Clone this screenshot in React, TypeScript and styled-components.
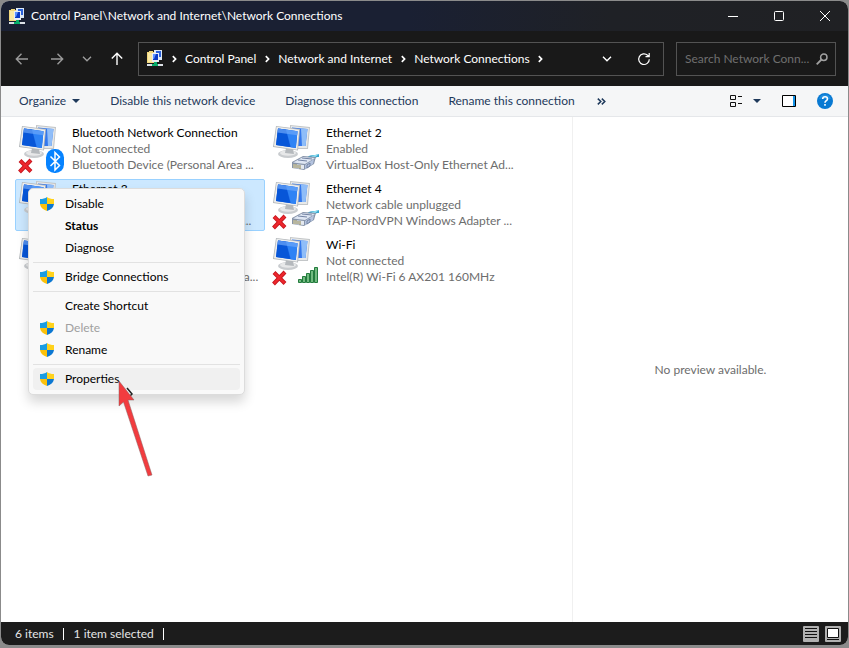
import React from "react";
import styled, { createGlobalStyle, css } from "styled-components";

const GlobalStyle = createGlobalStyle`
  *, *::before, *::after { box-sizing: border-box; }
  html, body { margin: 0; padding: 0; }
  body {
    background: #8b8b8b;
    font-family: Lato, "Open Sans", sans-serif;
    font-size: 12px;
    line-height: 16px;
    color: #000;
  }
  button, input { font: inherit; color: inherit; }
  svg { display: block; flex: none; }
`;

const Desktop = styled.div`
  display: flex;
  min-height: 100vh;
  padding: 1px 1px 3px;
`;

const Window = styled.main`
  display: flex;
  flex: 1;
  flex-direction: column;
  min-width: 0;
  overflow: hidden;
  border-radius: 8px;
  background: #fff;
`;

const PlainButton = styled.button`
  display: flex;
  align-items: center;
  justify-content: center;
  padding: 0;
  border: 0;
  background: transparent;
  white-space: nowrap;
`;

const TitleBar = styled.header`
  display: flex;
  align-items: center;
  height: 30px;
  padding-left: 8px;
  color: #fff;
  background: linear-gradient(90deg, #1a2033 0%, #1a2033 48%, #1f2126 72%, #202124 100%);
`;

const Title = styled.h1`
  flex: 1;
  margin: 0 0 0 6px;
  font-size: 12px;
  font-weight: 400;
  white-space: nowrap;
`;

const CaptionButton = styled(PlainButton)`
  width: 46px;
  height: 30px;
`;

const NavBar = styled.nav`
  display: flex;
  align-items: center;
  gap: 12px;
  height: 55px;
  padding: 0 12px 0 13px;
  color: #fff;
  background: #191919;
`;

const NavButtons = styled.div`
  display: flex;
  gap: 14px;
  padding-right: 1px;
`;

const HistoryButtons = styled.div`
  display: flex;
  gap: 19px;
`;

const NavButton = styled(PlainButton)<{ $dim?: boolean }>`
  width: 16px;
  height: 32px;
  color: ${(p) => (p.$dim ? "#9b9b9b" : "#fff")};
`;

const AddressBar = styled.div`
  display: flex;
  flex: 1;
  align-items: center;
  height: 34px;
  padding: 0 8px;
  border: 1px solid #535353;
`;

const Crumb = styled.a`
  color: #fff;
  text-decoration: none;
  white-space: nowrap;
`;

const CrumbArrow = styled.span`
  display: flex;
  justify-content: center;
  width: 22px;
`;

const Spacer = styled.div`
  flex: 1;
`;

const AddressButton = styled(PlainButton)`
  width: 22px;
  height: 32px;
  margin-left: 15px;
`;

const SearchBox = styled.label`
  display: flex;
  align-items: center;
  width: 160px;
  height: 34px;
  padding: 0 7px 0 8px;
  border: 1px solid #535353;
`;

const SearchInput = styled.input`
  flex: 1;
  min-width: 0;
  padding: 0;
  border: 0;
  outline: 0;
  background: transparent;
  text-overflow: ellipsis;
  &::placeholder { color: #6f6f6f; opacity: 1; }
`;

const CommandBar = styled.div`
  display: flex;
  align-items: center;
  gap: 30px;
  height: 31px;
  padding: 0 15px 0 18px;
  border-bottom: 1px solid #e5e7ea;
  color: #1e395b;
  background: #f5f6f7;
`;

const CommandGroup = styled.div`
  display: flex;
  gap: 22px;
`;

const Command = styled(PlainButton)<{ $wide?: boolean }>`
  gap: ${(p) => (p.$wide ? 10 : 6)}px;
  height: 30px;
`;

const CommandIcons = styled.div`
  display: flex;
  align-items: center;
  gap: 21px;
  margin-left: auto;
`;

const Body = styled.div`
  display: flex;
  flex: 1;
`;

const ListPane = styled.section`
  position: relative;
  flex: 1;
  min-width: 0;
  padding: 6px 0 8px 14px;
`;

const ConnectionList = styled.ul`
  display: grid;
  grid-template-columns: repeat(2, 250px);
  gap: 4px;
  margin: 0;
  padding: 0;
  list-style: none;
`;

const ConnectionItem = styled.li<{ $selected?: boolean }>`
  display: flex;
  gap: 7px;
  height: 52px;
  padding: 1px 0 0 2px;
  border: 1px solid ${(p) => (p.$selected ? "#99d1ff" : "transparent")};
  border-radius: 2px;
  background: ${(p) => (p.$selected ? "#cce8ff" : "transparent")};
`;

const ConnectionText = styled.div`
  color: #6d6d6d;
  white-space: nowrap;
`;

const ConnectionName = styled.div`
  color: #000;
`;

const PreviewPane = styled.aside`
  display: flex;
  align-items: center;
  justify-content: center;
  width: 276px;
  border-left: 1px solid #f0f0f0;
  color: #6d6d6d;
`;

const Menu = styled.div`
  position: absolute;
  top: 71px;
  left: 27px;
  width: 217px;
  padding: 4px;
  border: 1px solid #dcdcdc;
  border-radius: 5px;
  background: #f9f9f9;
  box-shadow: 0 7px 12px rgba(0, 0, 0, 0.16);
`;

const MenuItem = styled.button<{ $bold?: boolean; $hover?: boolean }>`
  display: grid;
  grid-template-columns: 14px 1fr;
  align-items: center;
  gap: 11px;
  width: 100%;
  height: 22px;
  padding: 0 7px;
  border: 0;
  border-radius: 4px;
  background: ${(p) => (p.$hover ? "#f0f0f0" : "transparent")};
  text-align: left;
  ${(p) => p.$bold && css`font-weight: 700;`}
  &:disabled { color: #a0a0a0; }
`;

const MenuLabel = styled.span`
  grid-column: 2;
`;

const MenuRule = styled.hr`
  height: 1px;
  margin: 3px 0;
  border: 0;
  background: #e2e2e2;
`;

const Pointer = styled.div`
  position: absolute;
  top: 263px;
  left: 116px;
  pointer-events: none;
`;

const StatusBar = styled.footer`
  display: flex;
  align-items: center;
  height: 23px;
  padding: 0 7px 0 14px;
  color: #e6e6e6;
  background: #1c1c1c;
`;

const StatusText = styled.span`
  margin-right: 10px;
  padding-right: 9px;
  line-height: 12px;
  border-right: 1px solid #fff;
`;

const ViewButton = styled(PlainButton)`
  width: 16px;
  height: 16px;
  margin-left: 6px;
  border-radius: 1px;
  background: #b1b1b1;
`;

const FolderIcon = () => (
  <svg width="16" height="17" viewBox="0 0 16 17" aria-hidden="true">
    <path d="M0 2h2V1h4v1h2v11H0z" fill="#f2d77c" />
    <path d="M1 3h6v9H1z" fill="#fae9a5" />
    <path d="M7 0h8v10H7z" fill="#dce9f7" />
    <path d="M9 1h5v6H9z" fill="#2b61da" />
    <path d="M5 3h7v9H5z" fill="#e8edf4" />
    <path d="M6 4h5v6H6z" fill="#0939c5" />
    <path d="M6 4h3L7 9H6z" fill="#5c92ff" />
    <path d="M0 14h16v2H0z" fill="#dce1e6" />
    <path d="M7 12h3v2h1v2H5v-2h2z" fill="#08ae6a" />
  </svg>
);

const Chevron = ({ down }: { down?: boolean }) =>
  down ? (
    <svg width="10" height="6" viewBox="0 0 10 6" fill="none" stroke="currentColor" strokeWidth="1.4" aria-hidden="true">
      <path d="M1 .8 5 4.8 9 .8" />
    </svg>
  ) : (
    <svg width="5" height="8" viewBox="0 0 5 8" fill="none" stroke="currentColor" strokeWidth="1.7" aria-hidden="true">
      <path d="M.8 1.200 3.600 4 .8 6.800" />
    </svg>
  );

const Arrow = ({ turn = 0 }: { turn?: number }) => (
  <svg width="14" height="14" viewBox="0 0 14 14" fill="none" stroke="currentColor" strokeWidth="1.4" aria-hidden="true">
    <path transform={`rotate(${turn} 7 7)`} d="M13 7H1.5M6.500 1.800 1.300 7l5.200 5.200" />
  </svg>
);

const CaretDown = () => (
  <svg width="8" height="4" viewBox="0 0 8 4" aria-hidden="true">
    <path d="M0 0h8L4 4z" fill="#1e395b" />
  </svg>
);

const Shield = () => (
  <svg width="14" height="14" viewBox="0 0 14 14" aria-hidden="true">
    <path d="M7 0C5.200 1.400 2.800 2 0 2v5h7z" fill="#1b9de2" />
    <path d="M7 0c1.800 1.400 4.200 2 7 2v5H7z" fill="#ffd21c" />
    <path d="M0 7c.4 3.200 2.800 5.600 7 7V7z" fill="#fcc10a" />
    <path d="M14 7c-.4 3.200-2.800 5.600-7 7V7z" fill="#0c78d2" />
  </svg>
);

type Badge = "bluetooth" | "cable" | "signal";

const Monitors = () => (
  <g>
    <path d="m17 0 20 2-2 22H17z" fill="#c3c6c8" />
    <path d="m18 1 18 2-2 20H18z" fill="#e8e9e9" />
    <path d="m19 2.500 15.500 1.500-2 17H19z" fill="#3478ed" />
    <path d="m28 3.400 6.500.6-2 17H29z" fill="#8fbdf8" />
    <ellipse cx="15" cy="29" rx="10" ry="4" fill="#c9cccf" />
    <ellipse cx="15" cy="28" rx="8" ry="2.800" fill="#e7e8e9" />
    <path d="m13 23 7 1 1 5-9-1z" fill="#b5b9bd" />
    <path d="M3 1 27 4l-2 21.500L0 22z" fill="#b3b7ba" />
    <path d="m3.600 1.800 22.500 3-1.900 20L1 21.300z" fill="#eceded" />
    <path d="m5 3.500 19.500 2.700-1.700 16.800L3 20z" fill="#155edf" />
    <path d="m5 3.500 8 1.100 4 17.500L3 20z" fill="#0756d8" />
    <path d="m13 4.600 11.500 1.600-1.700 16.800-5-.8z" fill="#2e83f5" />
    <path d="m5 3.500 19.500 2.700-.4 4L4.500 7.500z" fill="#6ca6fa" opacity=".7" />
  </g>
);

const ConnectionIcon = ({ badge, off }: { badge: Badge; off?: boolean }) => (
  <svg width="47" height="50" viewBox="0 0 47 50" aria-hidden="true">
    <g transform="translate(1 0)"><Monitors /></g>
    {off && (
      <g fill="none">
        <path d="m2 35.500 11 11M13 35 1.500 47" stroke="#c5161e" strokeWidth="4" />
        <path d="m2.500 36 10 10M12.500 35.500 2 46.500" stroke="#ee272d" strokeWidth="2.400" />
      </g>
    )}
    {badge === "bluetooth" && (
      <g>
        <rect x="28" y="24" width="18" height="24" rx="8.500" fill="#0783ff" />
        <path d="m32.500 31.500 9 9-4.500 4.500V27.500l4.500 4.500-9 9" fill="none" stroke="#fff" strokeWidth="1.500" />
      </g>
    )}
    {badge === "cable" && (
      <g>
        <path d="M35 33c2-4 7-2 12-4v3c-4 0-5 2-8 5z" fill="#36a5cf" />
        <path d="m39 31 8-2-5 4z" fill="#8cdcee" />
        <path d="m20 37 11-6 13 1-2 7-10 6-12-2z" fill="#8794a9" />
        <path d="m21 37.500 10-5.500 12 1-10 6z" fill="#dee6f3" />
        <path d="m33 40 9-6-1 5-8 5z" fill="#b4c3df" />
        <path d="m21 39 11 1v4l-11-1z" fill="#e4e9f0" />
        <path d="M22 39v4m2-4v4m2-3v3m2-3v4" stroke="#8b834e" />
        <path d="m26 35 9 1m-5-3 10 1m-5 6 3-2v3l-3 2z" fill="none" stroke="#7383a3" />
      </g>
    )}
    {badge === "signal" && (
      <g fill="#52a866" stroke="#237b3d">
        <path d="M26.500 42.500h3v3h-3zM30.500 39.500h3v6h-3zM34.500 36.500h3v9h-3zM38.500 33.500h3v12h-3zM42.500 30.500h3v15h-3z" />
        <path d="M28 43v2m4-5v5m4-8v8m4-11v11m4-14v14" stroke="#91cd99" />
      </g>
    )}
  </svg>
);

interface Connection {
  name: string;
  state: string;
  device: string;
  badge: Badge;
  off?: boolean;
  selected?: boolean;
}

const connections: Connection[] = [
  { name: "Bluetooth Network Connection", state: "Not connected", device: "Bluetooth Device (Personal Area ...", badge: "bluetooth", off: true },
  { name: "Ethernet 2", state: "Enabled", device: "VirtualBox Host-Only Ethernet Ad...", badge: "cable" },
  { name: "Ethernet 3", state: "Enabled", device: "Realtek PCIe GbE Family Control...", badge: "cable", selected: true },
  { name: "Ethernet 4", state: "Network cable unplugged", device: "TAP-NordVPN Windows Adapter ...", badge: "cable", off: true },
  { name: "Ethernet 5", state: "Enabled", device: "NordLynx Tunnel Network Adapta...", badge: "cable" },
  { name: "Wi-Fi", state: "Not connected", device: "Intel(R) Wi-Fi 6 AX201 160MHz", badge: "signal", off: true },
];

type Action = { label: string; shield?: boolean; bold?: boolean; disabled?: boolean; hover?: boolean };

const menuGroups: Action[][] = [
  [{ label: "Disable", shield: true }, { label: "Status", bold: true }, { label: "Diagnose" }],
  [{ label: "Bridge Connections", shield: true }],
  [{ label: "Create Shortcut" }, { label: "Delete", shield: true, disabled: true }, { label: "Rename", shield: true }],
  [{ label: "Properties", shield: true, hover: true }],
];

const ContextMenu = () => (
  <Menu role="menu">
    {menuGroups.map((group, i) => (
      <React.Fragment key={i}>
        {i > 0 && <MenuRule />}
        {group.map((a) => (
          <MenuItem key={a.label} role="menuitem" disabled={a.disabled} $bold={a.bold} $hover={a.hover}>
            {a.shield && <Shield />}
            <MenuLabel>{a.label}</MenuLabel>
          </MenuItem>
        ))}
      </React.Fragment>
    ))}
  </Menu>
);

export default function App() {
  return (
    <Desktop>
      <GlobalStyle />
      <Window>
        <TitleBar>
          <FolderIcon />
          <Title>Control Panel\Network and Internet\Network Connections</Title>
          <CaptionButton aria-label="Minimize">
            <svg width="10" height="10" viewBox="0 0 10 10"><path d="M0 5.500h10" stroke="#fff" /></svg>
          </CaptionButton>
          <CaptionButton aria-label="Maximize">
            <svg width="10" height="10" viewBox="0 0 10 10"><rect x=".5" y=".5" width="9" height="9" rx="1" fill="none" stroke="#fff" /></svg>
          </CaptionButton>
          <CaptionButton aria-label="Close">
            <svg width="10" height="10" viewBox="0 0 10 10"><path d="m0 0 10 10M10 0 0 10" stroke="#fff" /></svg>
          </CaptionButton>
        </TitleBar>

        <NavBar>
          <NavButtons>
            <HistoryButtons>
              <NavButton $dim aria-label="Back"><Arrow /></NavButton>
              <NavButton $dim aria-label="Forward"><Arrow turn={180} /></NavButton>
            </HistoryButtons>
            <NavButton $dim aria-label="Recent locations"><Chevron down /></NavButton>
            <NavButton aria-label="Up"><Arrow turn={90} /></NavButton>
          </NavButtons>
          <AddressBar>
            <FolderIcon />
            <CrumbArrow><Chevron /></CrumbArrow>
            <Crumb href="#control-panel">Control Panel</Crumb>
            <CrumbArrow><Chevron /></CrumbArrow>
            <Crumb href="#network">Network and Internet</Crumb>
            <CrumbArrow><Chevron /></CrumbArrow>
            <Crumb href="#connections">Network Connections</Crumb>
            <CrumbArrow><Chevron /></CrumbArrow>
            <Spacer />
            <AddressButton aria-label="Previous locations"><Chevron down /></AddressButton>
            <AddressButton aria-label="Refresh">
              <svg width="14" height="14" viewBox="0 0 14 14" fill="none" stroke="#fff" strokeWidth="1.200">
                <path d="M12.300 7.200A5.300 5.300 0 1 1 10.600 3.300L12 4.500M12.200 1v3.700H8.500" />
              </svg>
            </AddressButton>
          </AddressBar>
          <SearchBox>
            <SearchInput aria-label="Search Network Connections" placeholder="Search Network Conn..." />
            <svg width="12" height="12" viewBox="0 0 12 12" fill="none" stroke="#a0a0a0" strokeWidth="1.500" aria-hidden="true">
              <circle cx="7.800" cy="4.200" r="3.200" />
              <path d="M5.500 6.500.7 11.300" strokeWidth="1.800" />
            </svg>
          </SearchBox>
        </NavBar>

        <CommandBar>
          <Command>Organize <CaretDown /></Command>
          <Command>Disable this network device</Command>
          <Command>Diagnose this connection</Command>
          <CommandGroup>
            <Command>Rename this connection</Command>
            <Command aria-label="More commands">
              <svg width="9" height="7" viewBox="0 0 9 7" fill="none" stroke="#1e395b" strokeWidth="1.500"><path d="m.8.600 3 2.900-3 2.900M4.800.600l3 2.900-3 2.900" /></svg>
            </Command>
          </CommandGroup>
          <CommandIcons>
            <Command $wide aria-label="Change your view">
              <svg width="13" height="12" viewBox="0 0 13 12" fill="none" stroke="#111"><path d="M.5.500h5v4h-5zM.5 7.500h5v4h-5zM8 1.500h4M8 8.500h4" /></svg>
              <CaretDown />
            </Command>
            <Command aria-label="Hide the preview pane">
              <svg width="14" height="12" viewBox="0 0 14 12"><path d="M.5.500h13v11H.5z" fill="#fff" stroke="#000" /><path d="M11 1h2v10h-2z" fill="#1593e7" /></svg>
            </Command>
            <Command aria-label="Help">
              <svg width="16" height="16" viewBox="0 0 16 16">
                <circle cx="8" cy="8" r="8" fill="#0879d2" />
                <path d="M2 6a6.300 6.300 0 0 1 12 0" fill="#37a2ec" opacity=".5" />
                <path d="M5.700 6c0-3 4.800-3 4.800 0C10.500 7.800 8 7.600 8 9.800M8 11v1.800" fill="none" stroke="#fff" strokeWidth="1.600" />
              </svg>
            </Command>
          </CommandIcons>
        </CommandBar>

        <Body>
          <ListPane>
            <ConnectionList>
              {connections.map((c) => (
                <ConnectionItem key={c.name} $selected={c.selected}>
                  <ConnectionIcon badge={c.badge} off={c.off} />
                  <ConnectionText>
                    <ConnectionName>{c.name}</ConnectionName>
                    <div>{c.state}</div>
                    <div>{c.device}</div>
                  </ConnectionText>
                </ConnectionItem>
              ))}
            </ConnectionList>
            <ContextMenu />
            <Pointer>
              <svg width="38" height="98" viewBox="0 0 38 98" aria-hidden="true">
                <path d="m10 8 5 6-2 2v4" fill="none" stroke="#222" strokeWidth="1.500" />
                <path d="M2 1 17 20l-6 0L35 95l-4 1L6.500 22 2 26z" fill="#f23c3f" stroke="#8a6060" strokeWidth=".5" />
              </svg>
            </Pointer>
          </ListPane>
          <PreviewPane>No preview available.</PreviewPane>
        </Body>

        <StatusBar>
          <StatusText>6 items</StatusText>
          <StatusText>1 item selected</StatusText>
          <Spacer />
          <ViewButton aria-label="Details view">
            <svg width="12" height="11" viewBox="0 0 12 11"><path d="M0 .5h12M0 3.500h12M0 6.500h12M0 9.500h12" stroke="#111" /></svg>
          </ViewButton>
          <ViewButton aria-label="Large icons view">
            <svg width="12" height="12" viewBox="0 0 12 12"><path d="M.5.500h11v9H.5z" fill="#fff" stroke="#111" /><path d="M0 11.500h12" stroke="#111" /></svg>
          </ViewButton>
        </StatusBar>
      </Window>
    </Desktop>
  );
}
